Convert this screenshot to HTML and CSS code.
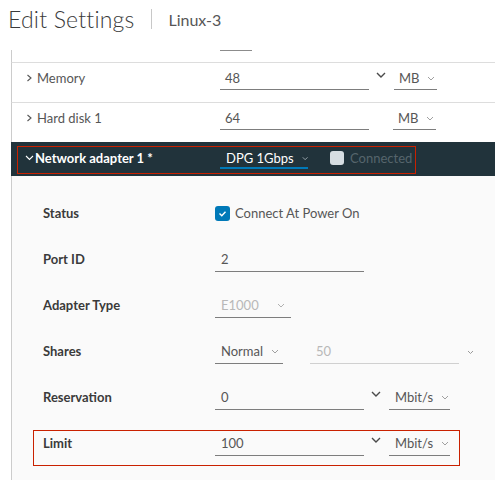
FILE: index.html
```html
<!DOCTYPE html>
<html lang="en">
<head>
    <meta charset="UTF-8">
    <title>Edit Settings</title>
    <link rel="stylesheet" href="styles.css">
</head>
<body>
    <div class="title">
        <h1>Edit Settings</h1>
        <span class="sep"></span>
        <span class="vm">Linux-3</span>
    </div>

    <div class="panel">
        <div class="stub"><span class="stub-line"></span></div>

        <div class="row">
            <div class="label"><svg class="caret" width="7" height="8" viewBox="0 0 7 8"><path d="M1.5 1 L5 4 L1.5 7" fill="none" stroke="#565656" stroke-width="1.1"/></svg>Memory</div>
            <div class="input wide">48</div>
            <svg class="spin" width="10" height="7" viewBox="0 0 10 7"><path d="M1 1 L5 5 L9 1" fill="none" stroke="#4a4a4a" stroke-width="1.4"/></svg>
            <div class="input unit">MB<svg class="dd" width="8" height="5" viewBox="0 0 8 5"><path d="M1 1 L4 4 L7 1" fill="none" stroke="#a0a0a0" stroke-width="1"/></svg></div>
        </div>

        <div class="row">
            <div class="label"><svg class="caret" width="7" height="8" viewBox="0 0 7 8"><path d="M1.5 1 L5 4 L1.5 7" fill="none" stroke="#565656" stroke-width="1.1"/></svg>Hard disk 1</div>
            <div class="input wide">64</div>
            <span class="spin-gap"></span>
            <div class="input unit">MB<svg class="dd" width="8" height="5" viewBox="0 0 8 5"><path d="M1 1 L4 4 L7 1" fill="none" stroke="#a0a0a0" stroke-width="1"/></svg></div>
        </div>

        <div class="adapter-bar">
            <div class="adapter-box">
                <div class="adapter-name"><svg class="caret-down" width="9" height="6" viewBox="0 0 9 6"><path d="M1 1 L4.5 4.5 L8 1" fill="none" stroke="#ffffff" stroke-width="1.1"/></svg>Network adapter 1 *</div>
                <div class="network">DPG 1Gbps<svg class="dd" width="8" height="5" viewBox="0 0 8 5"><path d="M1 1 L4 4 L7 1" fill="none" stroke="#b8c2c8" stroke-width="1"/></svg></div>
                <span class="check-off"></span>
                <span class="connected">Connected</span>
            </div>
        </div>

        <div class="details">
            <div class="drow">
                <div class="dlabel">Status</div>
                <span class="check-on"><svg width="15" height="15" viewBox="0 0 15 15"><path d="M4.5 7.5 L6.8 9.8 L10.5 5.8" fill="none" stroke="#ffffff" stroke-width="1.4"/></svg></span>
                <span class="check-text">Connect At Power On</span>
            </div>
            <div class="drow">
                <div class="dlabel">Port ID</div>
                <div class="input wide">2</div>
            </div>
            <div class="drow">
                <div class="dlabel">Adapter Type</div>
                <div class="input type disabled">E1000<svg class="dd" width="8" height="5" viewBox="0 0 8 5"><path d="M1 1 L4 4 L7 1" fill="none" stroke="#b0b0b0" stroke-width="1"/></svg></div>
            </div>
            <div class="drow">
                <div class="dlabel">Shares</div>
                <div class="input shares">Normal<svg class="dd" width="8" height="5" viewBox="0 0 8 5"><path d="M1 1 L4 4 L7 1" fill="none" stroke="#a0a0a0" stroke-width="1"/></svg></div>
                <div class="input wide disabled light">50</div>
                <svg class="small-dd" width="7" height="5" viewBox="0 0 7 5"><path d="M1 1 L3.5 3.5 L6 1" fill="none" stroke="#9a9a9a" stroke-width="1"/></svg>
            </div>
            <div class="drow">
                <div class="dlabel">Reservation</div>
                <div class="input wide">0</div>
                <svg class="spin" width="10" height="7" viewBox="0 0 10 7"><path d="M1 1 L5 5 L9 1" fill="none" stroke="#4a4a4a" stroke-width="1.4"/></svg>
                <div class="input rate">Mbit/s<svg class="dd" width="8" height="5" viewBox="0 0 8 5"><path d="M1 1 L4 4 L7 1" fill="none" stroke="#a0a0a0" stroke-width="1"/></svg></div>
            </div>
            <div class="drow limit">
                <div class="dlabel">Limit</div>
                <div class="input wide">100</div>
                <svg class="spin" width="10" height="7" viewBox="0 0 10 7"><path d="M1 1 L5 5 L9 1" fill="none" stroke="#4a4a4a" stroke-width="1.4"/></svg>
                <div class="input rate">Mbit/s<svg class="dd" width="8" height="5" viewBox="0 0 8 5"><path d="M1 1 L4 4 L7 1" fill="none" stroke="#a0a0a0" stroke-width="1"/></svg></div>
            </div>
        </div>
    </div>
</body>
</html>
```

FILE: styles.css
```css
/* Geral */
body {
    margin: 0;
    font-family: Lato, "Open Sans", sans-serif;
    font-size: 13px;
    color: #565656;
    background: #ffffff;
    overflow: hidden;
    white-space: nowrap;
}

/* Titulo */
.title {
    display: flex;
    align-items: center;
    height: 38px;
    padding-left: 8px;
}

.title h1 {
    margin: 0;
    font-size: 23px;
    font-weight: 300;
    color: #3a3a3a;
    letter-spacing: 0.2px;
}

.sep {
    width: 1px;
    height: 20px;
    background: #c8c8c8;
    margin: 0 16px 0 17px;
}

.vm {
    font-size: 16px;
    color: #565656;
}

/* Painel */
.panel {
    margin-top: 12px;
    margin-left: 11px;
}

.stub {
    height: 12px;
    border-left: 1px solid #cccccc;
}

.stub-line {
    display: block;
    width: 32px;
    height: 1px;
    margin: 4px 0 0 208px;
    background: #8c8c8c;
}

.row {
    display: flex;
    align-items: flex-start;
    height: 33px;
    padding: 6px 0 0 13px;
    border-top: 1px solid #dddddd;
    border-left: 1px solid #cccccc;
}

.row > *,
.drow > *,
.adapter-box > * {
    flex-shrink: 0;
}

.label {
    width: 195px;
    line-height: 18px;
    display: flex;
    align-items: center;
}

.caret {
    margin: 0 4px 0 1px;
}

.input {
    line-height: 18px;
    padding: 0 0 2px 5px;
    border-bottom: 1px solid #7d7d7d;
    color: #565656;
    box-sizing: border-box;
    display: flex;
    align-items: center;
}

.input .dd {
    margin-left: 8px;
}

.wide {
    width: 149px;
}

.spin {
    margin: 3px 8px 0 7px;
}

.spin-gap {
    width: 24px;
}

.unit {
    width: 43px;
}

/* Barra do adaptador */
.adapter-bar {
    height: 34px;
    background: #21333b;
    padding: 4px 0 0 6px;
    box-sizing: border-box;
}

.adapter-box {
    display: flex;
    align-items: flex-start;
    width: 399px;
    height: 28px;
    padding: 2px 0 0 7px;
    box-sizing: border-box;
    border: 1px solid #c92100;
}

.adapter-name {
    width: 195px;
    line-height: 18px;
    color: #ffffff;
    font-weight: 700;
    display: flex;
    align-items: center;
}

.caret-down {
    margin-right: 1px;
}

.network {
    width: 88px;
    line-height: 18px;
    padding-left: 6px;
    box-sizing: border-box;
    border-bottom: 2px solid #0079b8;
    color: #ffffff;
    display: flex;
    align-items: center;
}

.network .dd {
    margin-left: 8px;
}

.check-off {
    width: 14px;
    height: 14px;
    margin: 2px 6px 0 22px;
    border-radius: 3px;
    background: #d6dde1;
}

.connected {
    line-height: 18px;
    color: #56656c;
}

/* Detalhes */
.details {
    background: #fafafa;
    border-left: 1px solid #cccccc;
    padding: 14px 0 14px 31px;
}

.drow {
    display: flex;
    align-items: flex-start;
    height: 46px;
    position: relative;
}

.dlabel {
    width: 172px;
    line-height: 46px;
    font-weight: 700;
    color: #3a3a3a;
}

.drow .input {
    margin-top: 13px;
    line-height: 20px;
    padding-left: 6px;
}

.check-on {
    margin-top: 16px;
    width: 15px;
    height: 15px;
    border-radius: 3px;
    background: #0079b8;
}

.check-on svg {
    display: block;
}

.check-text {
    line-height: 46px;
    margin-left: 5px;
}

.type {
    width: 76px;
    justify-content: space-between;
    padding-right: 6px;
}

.shares {
    width: 68px;
    margin-right: 27px;
}

.disabled {
    color: #b8b8b8;
}

.light {
    border-bottom-color: #d0d0d0;
}

.small-dd {
    margin: 22px 0 0 8px;
}

.drow .spin {
    margin-top: 17px;
}

.rate {
    width: 61px;
}

/* Destaque do limite */
.limit::after {
    content: "";
    position: absolute;
    left: -10px;
    top: 10px;
    width: 427px;
    height: 36px;
    border: 1px solid #c92100;
    box-sizing: border-box;
}
```
